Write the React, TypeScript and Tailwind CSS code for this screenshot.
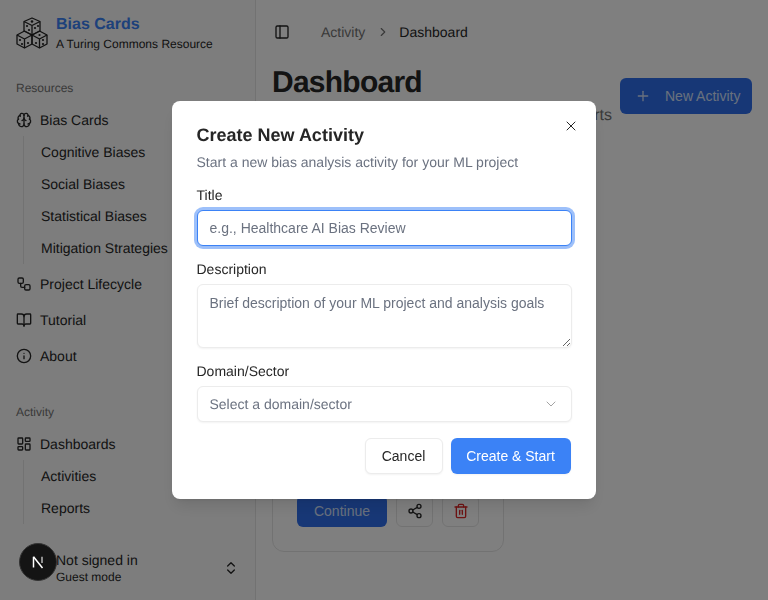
import React from "react";
import { Brain, BookOpen, Info, LayoutDashboard, ChevronsUpDown, PanelLeft, ChevronRight, ChevronDown, Plus, X, Share2, Trash2, Workflow } from "lucide-react";

function Logo() {
  return (
    <svg width="32" height="32" viewBox="0 0 32 32" fill="none" stroke="#222" strokeWidth="1.3" strokeLinejoin="round" className="shrink-0">
      <path d="M16 1 24 4.500V14L16 18 8 14V4.500Z" />
      <path d="M8 4.500 16 8.500 24 4.500M16 8.500V18" />
      <path d="M8.500 14 16 18V27L8.500 31 1 27V18Z" />
      <path d="M1 18 8.500 22 16 18M8.500 22V31" />
      <path d="M23.500 14 31 18V27L23.500 31 16 27V18Z" />
      <path d="M16 18 23.500 22 31 18M23.500 22V31" />
      <g fill="#222" stroke="none">
        <circle cx="16" cy="4.500" r="1.300" />
        <circle cx="11" cy="9" r="1.100" />
        <circle cx="13" cy="13" r="1.100" />
        <circle cx="19" cy="11" r="1.100" />
        <circle cx="22" cy="9" r="1.100" />
        <circle cx="4" cy="23" r="1.100" />
        <circle cx="6" cy="27" r="1.100" />
        <circle cx="12" cy="26" r="1.100" />
        <circle cx="20" cy="26" r="1.100" />
        <circle cx="27" cy="23" r="1.100" />
        <circle cx="27" cy="27" r="1.100" />
        <circle cx="23.500" cy="18" r="1.100" />
      </g>
    </svg>
  );
}

function TopItem({ icon, label }: { icon: React.ReactNode; label: string }) {
  return (
    <div className="flex h-9 items-center gap-2 pl-4 text-sm text-[#262626]">
      {icon}
      <span>{label}</span>
    </div>
  );
}

function SubList({ items }: { items: string[] }) {
  return (
    <div className="ml-[23px] border-l border-[#e5e5e5] pl-[17px]">
      {items.map((t) => (
        <div key={t} className="flex h-8 items-center text-sm whitespace-nowrap text-[#262626]">
          {t}
        </div>
      ))}
    </div>
  );
}

function Sidebar() {
  return (
    <aside className="flex h-full w-[256px] shrink-0 flex-col border-r border-[#e5e5e5] bg-[#fafafa]">
      <div className="flex h-[64px] items-center gap-2 pl-4 pt-[1px]">
        <Logo />
        <div className="flex flex-col">
          <span className="pt-[2px] text-base leading-5 font-bold text-[#3b82f6]">Bias Cards</span>
          <span className="text-xs leading-[18px] text-[#262626]">A Turing Commons Resource</span>
        </div>
      </div>
      <div className="flex-1 overflow-hidden">
        <div className="pt-[14px] pl-4 text-xs leading-5 text-[#737373]">Resources</div>
        <div className="mt-[6px]">
          <div className="flex h-8 items-center gap-2 pl-4 text-sm text-[#262626]">
            <Brain size={16} />
            <span>Bias Cards</span>
          </div>
          <SubList items={["Cognitive Biases", "Social Biases", "Statistical Biases", "Mitigation Strategies"]} />
          <div className="h-[2px]" />
          <TopItem icon={<Workflow size={16} />} label="Project Lifecycle" />
          <TopItem icon={<BookOpen size={16} />} label="Tutorial" />
          <TopItem icon={<Info size={16} />} label="About" />
        </div>
        <div className="mt-[28px] pl-4 text-xs leading-5 text-[#737373]">Activity</div>
        <div className="mt-[6px]">
          <div className="flex h-8 items-center gap-2 pl-4 text-sm text-[#262626]">
            <LayoutDashboard size={16} />
            <span>Dashboards</span>
          </div>
          <SubList items={["Activities", "Reports"]} />
        </div>
      </div>
      <div className="flex h-[72px] items-start pl-[56px] pr-4 pt-[22px]">
        <div className="flex flex-1 flex-col">
          <span className="text-sm leading-5 text-[#262626]">Not signed in</span>
          <span className="-mt-[1px] text-xs leading-4 text-[#262626]">Guest mode</span>
        </div>
        <ChevronsUpDown size={16} className="mt-[10px] text-[#262626]" />
      </div>
    </aside>
  );
}

function Main() {
  return (
    <main className="flex h-full flex-1 flex-col bg-white px-4">
      <header className="flex h-[64px] items-center text-sm">
        <PanelLeft size={16} className="ml-[2px] text-[#262626]" />
        <span className="ml-[31px] text-[#737373]">Activity</span>
        <ChevronRight size={14} className="ml-[11px] text-[#737373]" />
        <span className="ml-[9px] text-[#262626]">Dashboard</span>
      </header>
      <div className="flex items-start justify-between">
        <div className="w-[340px]">
          <h1 className="pt-[1px] text-3xl leading-9 font-bold tracking-tight text-[#262626]">Dashboard</h1>
          <p className="mt-[3px] text-right text-base text-[#737373]">Manage your activities and reports</p>
        </div>
        <button className="mt-[14px] flex h-9 w-[132px] items-center gap-[14px] rounded-md bg-[#2f6fed] pl-[15px] text-sm text-[#d3e1fb]">
          <Plus size={16} />
          New Activity
        </button>
      </div>
      <div className="mt-[34px] flex h-[390px] w-[232px] flex-col justify-end rounded-xl border border-[#e5e5e5] px-6 pb-6">
        <div className="flex items-center gap-[9px]">
          <button className="h-8 w-[90px] rounded-md bg-[#2f6fed] text-sm text-[#d3e1fb]">Continue</button>
          <button className="flex h-8 w-[37px] items-center justify-center rounded-md border border-[#e5e5e5] text-[#262626]">
            <Share2 size={16} />
          </button>
          <button className="flex h-8 w-[37px] items-center justify-center rounded-md border border-[#e5e5e5] text-[#dc2626]">
            <Trash2 size={16} />
          </button>
        </div>
      </div>
    </main>
  );
}

function Label({ children }: { children: React.ReactNode }) {
  return <div className="text-sm leading-5 text-[#262626]">{children}</div>;
}

function Dialog() {
  return (
    <div className="fixed top-[101px] left-[172px] flex h-[398px] w-[424px] flex-col rounded-lg bg-white pt-[24px] pr-[24.5px] pl-[24.5px] shadow-lg">
      <X size={16} strokeWidth={1.5} className="absolute top-[17px] right-[17px] text-[#262626]" />
      <h2 className="text-lg leading-[20px] font-bold text-[#262626]">Create New Activity</h2>
      <p className="mt-[7px] text-sm leading-5 text-[#6b7280]">Start a new bias analysis activity for your ML project</p>
      <div className="mt-[13px]"><Label>Title</Label></div>
      <input
        readOnly
        placeholder="e.g., Healthcare AI Bias Review"
        className="mt-[5px] h-9 w-full rounded-md border border-[#3b82f6] bg-white px-3 text-sm shadow-xs ring-[3px] ring-[#3b82f6]/50 outline-none placeholder:text-[#6b7280]"
      />
      <div className="mt-[13px]"><Label>Description</Label></div>
      <textarea
        readOnly
        placeholder="Brief description of your ML project and analysis goals"
        className="mt-[5px] block h-16 w-full rounded-md border border-[#ececec] bg-white px-3 py-[8px] text-sm leading-5 shadow-xs outline-none placeholder:text-[#6b7280]"
      />
      <div className="mt-[13px]"><Label>Domain/Sector</Label></div>
      <div className="mt-[5px] flex h-9 w-full items-center justify-between rounded-md border border-[#ececec] bg-white px-3 text-sm text-[#6b7280] shadow-xs">
        <span>Select a domain/sector</span>
        <ChevronDown size={16} strokeWidth={1.5} className="text-[#a3a3a3]" />
      </div>
      <div className="mt-4 flex justify-end gap-2 pr-[1px]">
        <button className="h-9 w-[78px] rounded-md border border-[#ececec] bg-white text-sm text-[#262626] shadow-xs">Cancel</button>
        <button className="h-9 w-[120px] rounded-md bg-[#3b82f6] text-sm text-white shadow-xs">Create &amp; Start</button>
      </div>
    </div>
  );
}

function DevBadge() {
  return (
    <div className="fixed top-[543px] left-[19px] flex h-[38px] w-[38px] items-center justify-center rounded-full border border-[#333] bg-[#141414]">
      <svg width="14" height="14" viewBox="0 0 14 14" fill="none" stroke="#fff" strokeWidth="1.500">
        <path d="M2.500 12.500V1.800" />
        <path d="M2.500 1.800 11.500 13" />
        <path d="M11 1.800V8" strokeOpacity="0.7" />
      </svg>
    </div>
  );
}

export default function App() {
  return (
    <div className="relative flex h-[600px] w-[768px] overflow-hidden font-['Liberation_Sans',Arial,sans-serif] [text-rendering:geometricPrecision]">
      <Sidebar />
      <Main />
      <div className="fixed inset-0 bg-black/50" />
      <Dialog />
      <DevBadge />
    </div>
  );
}
